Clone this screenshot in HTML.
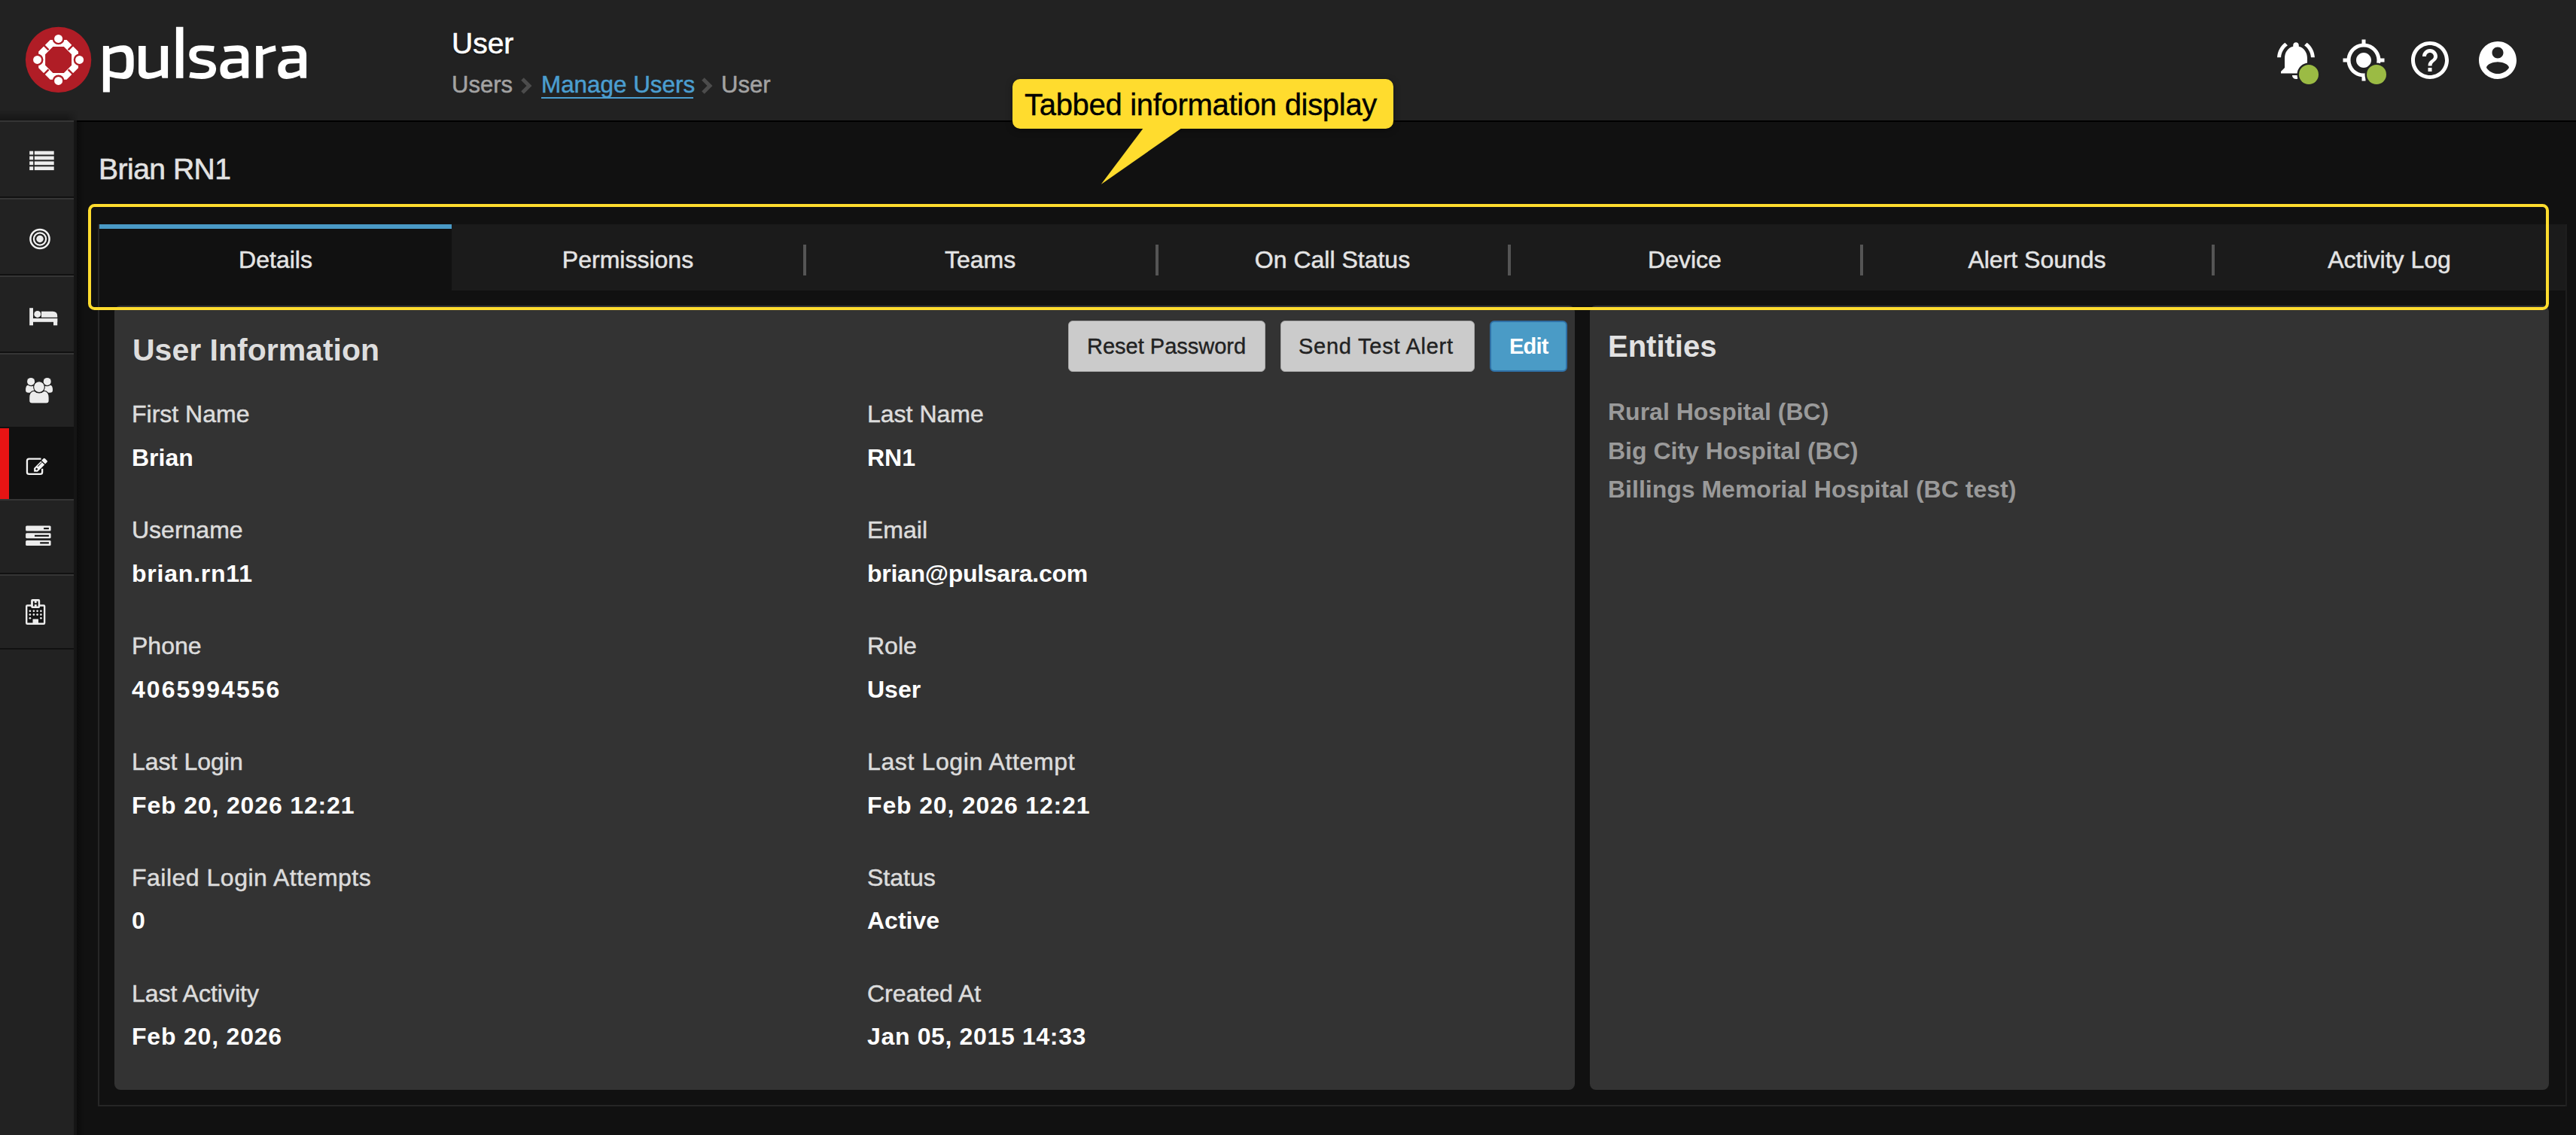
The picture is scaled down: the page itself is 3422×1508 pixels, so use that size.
<!DOCTYPE html>
<html><head><meta charset="utf-8">
<style>
html,body{margin:0;padding:0;}
body{width:3422px;height:1508px;background:#111;position:relative;overflow:hidden;font-family:"Liberation Sans",sans-serif;}
.a{position:absolute;white-space:nowrap;line-height:1;}
#hdr{position:absolute;left:0;top:0;width:3422px;height:160px;background:#222;}
#hdrline{position:absolute;left:102px;top:160px;width:3320px;height:2px;background:#000;}
#side{position:absolute;left:0;top:160px;width:98px;height:1348px;background:#222;}
#sideshadow{position:absolute;left:98px;top:162px;width:14px;height:1346px;background:linear-gradient(to right,#151515 0,#151515 4px,#0b0b0b 4px,#0e0e0e 8px,#111 14px);}
.si{position:absolute;left:0;width:98px;box-sizing:border-box;}
.lt{position:absolute;left:0;width:98px;height:2px;background:#353535;}
.dk{position:absolute;left:0;width:98px;height:2px;background:#111;}
svg{position:absolute;overflow:visible;}
.tab{position:absolute;top:298px;height:88px;width:468px;background:#1b1b1b;}
.tabt{position:absolute;left:0;width:468px;text-align:center;top:329px;font-size:32px;color:#e4e4e4;line-height:1;-webkit-text-stroke:0.5px #e4e4e4;}
.sep{position:absolute;top:325px;width:4px;height:41px;background:#555;}
.panel{position:absolute;top:406px;background:#333;border-radius:8px;}
.lbl{font-size:32px;color:#dcdcdc;-webkit-text-stroke:0.5px #dcdcdc;}
.val{font-size:32px;color:#fff;font-weight:bold;}
.btn{position:absolute;top:426px;height:68px;box-sizing:border-box;border-radius:6px;background:#cbcbcb;border:1px solid #a9a9a9;}
</style></head><body>

<!-- header -->
<div id="hdr"></div>
<div id="hdrline"></div>

<!-- logo -->
<svg style="left:0;top:0" width="140" height="160">
 <g transform="translate(77.6,79.4)">
  <circle r="43.7" fill="#b01d26"/>
  <path fill="#fff" fill-rule="evenodd" d="M-10.94,-26.4 L10.94,-26.4 L26.4,-10.94 L26.4,10.94 L10.94,26.4 L-10.94,26.4 L-26.4,10.94 L-26.4,-10.94 Z M-7.25,-17.5 L7.25,-17.5 L17.5,-7.25 L17.5,7.25 L7.25,17.5 L-7.25,17.5 L-17.5,7.25 L-17.5,-7.25 Z"/>
  <g stroke="#b01d26" stroke-width="2.4">
   <line x1="13" y1="13" x2="30" y2="30"/><line x1="-13" y1="13" x2="-30" y2="30"/><line x1="13" y1="-13" x2="30" y2="-30"/><line x1="-13" y1="-13" x2="-30" y2="-30"/>
  </g>
  <g fill="#b01d26"><circle cx="0" cy="-28" r="7.9"/><circle cx="0" cy="28" r="7.9"/><circle cx="-28" cy="0" r="7.9"/><circle cx="28" cy="0" r="7.9"/></g>
  <g fill="#fff"><circle cx="0" cy="-28" r="5.5"/><circle cx="0" cy="28" r="5.5"/><circle cx="-28" cy="0" r="5.5"/><circle cx="28" cy="0" r="5.5"/></g>
 </g>
</svg>
<svg style="left:120px;top:20px" width="300" height="120"><g transform="scale(0.11646)" fill="#fff" fill-rule="evenodd">
<path d="M145,352 L212,352 L216,384 Q300,345 380,345 Q495,345 495,500 L495,575 Q495,730 380,730 Q300,730 222,705 L222,880 L145,880 Z M222,450 Q300,420 350,420 Q410,420 410,500 L410,580 Q410,660 350,660 Q290,660 222,635 Z"/>
<path d="M550,352 L632,352 L632,625 Q632,660 670,660 Q730,660 805,625 L805,352 L885,352 L885,720 L820,720 L812,690 Q720,730 660,730 Q550,730 550,640 Z"/>
<path d="M978,135 L1060,135 L1060,720 L978,720 Z"/>
<path d="M1415,355 L1405,420 Q1320,408 1260,408 Q1207,410 1207,450 Q1207,490 1260,500 L1340,516 Q1435,540 1435,610 Q1435,730 1270,730 Q1190,730 1127,712 L1140,650 Q1210,662 1270,662 Q1357,662 1357,610 Q1357,585 1320,577 L1230,558 Q1127,530 1127,450 Q1127,345 1270,345 Q1340,345 1415,355 Z"/>
<path d="M1520,360 Q1620,345 1680,345 Q1805,345 1805,460 L1805,720 L1738,720 L1728,690 Q1650,730 1580,730 Q1480,730 1480,620 Q1480,500 1620,498 L1725,495 L1725,460 Q1725,412 1670,412 Q1600,412 1535,422 Z M1725,550 L1620,553 Q1565,556 1565,605 Q1565,660 1610,660 Q1660,660 1725,628 Z"/>
<path d="M1890,352 L1960,352 L1968,395 Q2040,355 2110,345 L2118,410 Q2040,425 1970,455 L1970,720 L1890,720 Z"/>
<path transform="translate(660,0)" d="M1520,360 Q1620,345 1680,345 Q1805,345 1805,460 L1805,720 L1738,720 L1728,690 Q1650,730 1580,730 Q1480,730 1480,620 Q1480,500 1620,498 L1725,495 L1725,460 Q1725,412 1670,412 Q1600,412 1535,422 Z M1725,550 L1620,553 Q1565,556 1565,605 Q1565,660 1610,660 Q1660,660 1725,628 Z"/>
</g></svg>

<!-- title + breadcrumb -->
<div class="a" style="left:600px;top:37.5px;font-size:39px;color:#fff;text-shadow:0 1px 2px #000;-webkit-text-stroke:0.6px #fff;">User</div>
<div class="a" style="left:600px;top:97px;font-size:31px;color:#a3a3a3;-webkit-text-stroke:0.5px #a3a3a3;">Users</div>
<svg style="left:690px;top:102px" width="20" height="24"><path d="M4,3 L13,12 L4,21" fill="none" stroke="#4c4c4c" stroke-width="5"/></svg>
<div class="a" style="left:719px;top:97px;font-size:31.4px;color:#4b9ed0;-webkit-text-stroke:0.5px #4b9ed0;">Manage Users</div>
<div style="position:absolute;left:719px;top:129px;width:202px;height:2px;background:#4b9ed0;"></div>
<svg style="left:930px;top:102px" width="20" height="24"><path d="M4,3 L13,12 L4,21" fill="none" stroke="#4c4c4c" stroke-width="5"/></svg>
<div class="a" style="left:958px;top:97px;font-size:31px;color:#a3a3a3;-webkit-text-stroke:0.5px #a3a3a3;">User</div>

<!-- header icons -->
<svg style="left:3020px;top:49.5px" width="60" height="60" viewBox="0 0 24 24"><path fill="#fff" d="M7.58 4.08L6.15 2.65C3.75 4.48 2.17 7.3 2.03 10.5h2c.15-2.65 1.51-4.97 3.55-6.42zm12.39 6.42h2c-.15-3.2-1.73-6.02-4.12-7.85l-1.42 1.43c2.02 1.45 3.39 3.77 3.54 6.42zM18 11c0-3.07-1.64-5.64-4.5-6.32V4c0-.83-.67-1.5-1.5-1.5s-1.5.67-1.5 1.5v.68C7.63 5.36 6 7.92 6 11v5l-2 2v1h16v-1l-2-2v-5zm-6 11c.14 0 .27-.01.4-.04.65-.14 1.18-.58 1.44-1.18.1-.24.15-.5.15-.78h-4c.01 1.1.9 2 2.01 2z"/></svg>
<svg style="left:3109.5px;top:49.5px" width="60" height="60" viewBox="0 0 24 24"><path fill="#fff" d="M12 8c-2.21 0-4 1.79-4 4s1.79 4 4 4 4-1.79 4-4-1.79-4-4-4zm8.94 3c-.46-4.17-3.77-7.48-7.94-7.94V1h-2v2.06C6.83 3.52 3.52 6.83 3.06 11H1v2h2.06c.46 4.17 3.77 7.48 7.94 7.94V23h2v-2.06c4.17-.46 7.48-3.77 7.94-7.94H23v-2h-2.06zM12 19c-3.87 0-7-3.13-7-7s3.13-7 7-7 7 3.13 7 7-3.13 7-7 7z"/></svg>
<svg style="left:3198px;top:49.5px" width="60" height="60" viewBox="0 0 24 24"><path fill="#fff" d="M11 18h2v-2h-2v2zm1-16C6.48 2 2 6.48 2 12s4.48 10 10 10 10-4.48 10-10S17.52 2 12 2zm0 18c-4.41 0-8-3.59-8-8s3.59-8 8-8 8 3.59 8 8-3.59 8-8 8zm0-14c-2.21 0-4 1.79-4 4h2c0-1.1.9-2 2-2s2 .9 2 2c0 2-3 1.75-3 5h2c0-2.25 3-2.5 3-5 0-2.21-1.79-4-4-4z"/></svg>
<svg style="left:3288px;top:49.5px" width="60" height="60" viewBox="0 0 24 24"><path fill="#fff" d="M12 2C6.48 2 2 6.48 2 12s4.48 10 10 10 10-4.48 10-10S17.52 2 12 2zm0 3c1.66 0 3 1.34 3 3s-1.34 3-3 3-3-1.34-3-3 1.34-3 3-3zm0 14.2c-2.5 0-4.710-1.28-6-3.22.03-1.99 4-3.08 6-3.08 1.99 0 5.970 1.09 6 3.08-1.29 1.94-3.5 3.22-6 3.22z"/></svg>
<svg style="left:3040px;top:72px" width="54" height="54"><circle cx="27" cy="27" r="15.5" fill="#222"/><circle cx="27" cy="27" r="13" fill="#9bbb44"/></svg>
<svg style="left:3130px;top:72px" width="54" height="54"><circle cx="27" cy="27" r="15.5" fill="#222"/><circle cx="27" cy="27" r="13" fill="#9bbb44"/></svg>

<!-- sidebar -->
<div id="side"></div>
<div id="sideshadow"></div>
<div style="position:absolute;left:0;top:146px;width:104px;height:14px;background:linear-gradient(to bottom,rgba(0,0,0,0),rgba(0,0,0,0.35));-webkit-mask-image:linear-gradient(to right,#000 85%,transparent);"></div>
<div style="position:absolute;left:98px;top:160px;width:4px;height:2px;background:#151515;"></div>
<div class="lt" style="top:160px"></div>
<div class="dk" style="top:261px"></div>
<div class="lt" style="top:263px"></div>
<div class="dk" style="top:364px"></div>
<div class="lt" style="top:366px"></div>
<div class="dk" style="top:467px"></div>
<div class="lt" style="top:469px"></div>
<div style="position:absolute;left:0;top:567px;width:98px;height:96px;background:#111;"></div>
<div style="position:absolute;left:0;top:569px;width:12px;height:94px;background:#e81414;"></div>
<div class="lt" style="top:663px"></div>
<div class="dk" style="top:761px"></div>
<div class="lt" style="top:763px"></div>
<div class="dk" style="top:861px"></div>

<!-- side icons -->
<svg style="left:0;top:0" width="98" height="900">
 <g fill="#ececec">
  <rect x="39.2" y="200.7" width="5" height="4.8"/><rect x="45.8" y="200.7" width="25.9" height="4.8"/>
  <rect x="39.2" y="207.5" width="5" height="4.8"/><rect x="45.8" y="207.5" width="25.9" height="4.8"/>
  <rect x="39.2" y="214.4" width="5" height="4.8"/><rect x="45.8" y="214.4" width="25.9" height="4.8"/>
  <rect x="39.2" y="221.3" width="5" height="4.8"/><rect x="45.8" y="221.3" width="25.9" height="4.8"/>
 </g>
 <g fill="none" stroke="#f2f2f2"><circle cx="53" cy="317.5" r="12.6" stroke-width="2.5"/><circle cx="53" cy="317.5" r="8.1" stroke-width="2.2"/></g>
 <circle cx="53" cy="317.5" r="4.7" fill="#ececec"/>
 <!-- bed -->
 <g fill="#ececec">
  <rect x="39.2" y="409.2" width="4.8" height="23.1"/>
  <circle cx="49.8" cy="417.4" r="4.5"/>
  <path d="M55,413.8 L70,413.8 Q76.2,413.8 76.2,420 L76.2,421.7 L55,421.7 Z"/>
  <rect x="44" y="423" width="32.2" height="4.8"/>
  <rect x="71" y="423" width="5.2" height="9.3"/>
 </g>
 <!-- users -->
 <g fill="#ececec">
  <path d="M34.1,518.5 Q34.1,511.7 37.2,511.7 Q41,514.2 45.2,512.6 L46,521.7 L37.8,521.7 Q34.1,521.7 34.1,518.5 Z"/>
  <path d="M70,518.5 Q70,511.7 66.9,511.7 Q63.1,514.2 58.9,512.6 L58.1,521.7 L66.3,521.7 Q70,521.7 70,518.5 Z"/>
  <circle cx="41.1" cy="506.9" r="5"/><circle cx="62.75" cy="506.9" r="5"/>
 </g>
 <g fill="#ececec" stroke="#1a1a1a" stroke-width="1.1">
  <path d="M38.7,532.6 L38.7,528.5 Q38.7,519.8 45.5,519.3 Q52,524.8 58.5,519.3 Q65.2,519.8 65.2,528.5 L65.2,532.6 Q65.2,536.1 61.7,536.1 L42.2,536.1 Q38.7,536.1 38.7,532.6 Z"/>
  <circle cx="52" cy="514.1" r="7.4"/>
 </g>
 <!-- edit -->
 <path d="M54.5,609.55 L38.65,609.55 Q35.95,609.55 35.95,612.25 L35.95,627.15 Q35.95,629.85 38.65,629.85 L53.45,629.85 Q56.15,629.85 56.15,627.15 L56.15,622.8" fill="none" stroke="#f4f4f4" stroke-width="2.3"/>
 <g transform="translate(45.1,626.7) rotate(-45)">
  <path d="M0,0 L3.4,-3.4 L16.5,-3.4 L16.5,3.4 L3.4,3.4 Z M17.7,-3.4 L21.2,-3.4 Q22.7,-3.4 22.7,-1.9 L22.7,1.9 Q22.7,3.4 21.2,3.4 L17.7,3.4 Z" fill="#f4f4f4" stroke="#111" stroke-width="1.6" paint-order="stroke"/>
  <rect x="8.7" y="-1.75" width="7.5" height="0.8" fill="#111"/>
  <rect x="3.8" y="-1.2" width="2.4" height="2.4" fill="#111"/>
 </g>
 <!-- storage -->
 <g fill="#ececec">
  <rect x="34.1" y="698.5" width="33.5" height="7" rx="1.5"/>
  <rect x="34.1" y="708.2" width="33.5" height="7" rx="1.5"/>
  <rect x="34.1" y="717.9" width="33.5" height="7" rx="1.5"/>
 </g>
 <g fill="#111">
  <rect x="58.1" y="701.1" width="6.8" height="2.1"/>
  <rect x="46" y="710.8" width="18.9" height="2.1"/>
  <rect x="53.2" y="720.3" width="11.7" height="2.1"/>
 </g>
 <!-- hospital -->
 <rect x="35.2" y="804.5" width="23.9" height="24.2" rx="1" fill="#141414" stroke="#ececec" stroke-width="2.4"/>
 <rect x="41.1" y="796" width="12.1" height="12" rx="2" fill="#ececec"/>
 <g fill="#141414">
  <rect x="43.9" y="798.8" width="1.9" height="6.7"/><rect x="48.7" y="798.8" width="1.9" height="6.7"/><rect x="44" y="801.3" width="6.5" height="1.8"/>
 </g>
 <g fill="#ececec">
  <circle cx="39.9" cy="811.8" r="1.35"/><circle cx="44.9" cy="811.8" r="1.35"/><circle cx="49.6" cy="811.8" r="1.35"/><circle cx="54.4" cy="811.8" r="1.35"/>
  <circle cx="39.9" cy="816.6" r="1.35"/><circle cx="44.9" cy="816.6" r="1.35"/><circle cx="49.6" cy="816.6" r="1.35"/><circle cx="54.4" cy="816.6" r="1.35"/>
  <circle cx="39.9" cy="821.3" r="1.35"/><circle cx="54.4" cy="821.3" r="1.35"/>
  <rect x="43.5" y="822.5" width="7.5" height="7.3"/>
 </g>
</svg>

<!-- page title -->
<div class="a" style="left:131px;top:205px;font-size:39px;color:#e2e2e2;letter-spacing:-0.5px;-webkit-text-stroke:0.6px #e2e2e2;">Brian RN1</div>

<!-- container borders -->
<div style="position:absolute;left:130px;top:298px;width:2px;height:1172px;background:#262626;"></div>
<div style="position:absolute;left:130px;top:1468px;width:3280px;height:2px;background:#262626;"></div>
<div style="position:absolute;left:3408px;top:298px;width:2px;height:1172px;background:#1e1e1e;"></div>

<!-- tabs -->
<div class="tab" style="left:132px;background:#111;"><div style="position:absolute;left:0;top:0;width:468px;height:6px;background:#4a9ac6;"></div></div>
<div class="tab" style="left:600px;"></div>
<div class="tab" style="left:1068px;"></div>
<div class="tab" style="left:1536px;"></div>
<div class="tab" style="left:2004px;"></div>
<div class="tab" style="left:2472px;"></div>
<div class="tab" style="left:2940px;"></div>
<div class="sep" style="left:1067px"></div>
<div class="sep" style="left:1535px"></div>
<div class="sep" style="left:2003px"></div>
<div class="sep" style="left:2471px"></div>
<div class="sep" style="left:2938px"></div>
<div class="a tabt" style="left:132px">Details</div>
<div class="a tabt" style="left:600px">Permissions</div>
<div class="a tabt" style="left:1068px">Teams</div>
<div class="a tabt" style="left:1536px">On Call Status</div>
<div class="a tabt" style="left:2004px">Device</div>
<div class="a tabt" style="left:2472px">Alert Sounds</div>
<div class="a tabt" style="left:2940px">Activity Log</div>

<!-- panels -->
<div class="panel" style="left:152px;width:1940px;height:1042px;"></div>
<div class="panel" style="left:2112px;width:1274px;height:1042px;"></div>

<!-- left panel -->
<div class="a" style="left:176px;top:445px;font-size:41px;color:#dedede;font-weight:bold;">User Information</div>
<div class="btn" style="left:1419px;width:262px;"></div>
<div class="btn" style="left:1701px;width:258px;"></div>
<div class="btn" style="left:1979px;width:103px;background:#4a9bc6;border:2px solid #2f70a6;"></div>
<div class="a" style="left:1444px;top:446px;font-size:29px;color:#222;-webkit-text-stroke:0.4px #222;">Reset Password</div>
<div class="a" style="left:1725px;top:446px;font-size:29px;color:#222;letter-spacing:0.75px;-webkit-text-stroke:0.4px #222;">Send Test Alert</div>
<div class="a" style="left:2005px;top:446px;font-size:29px;color:#fff;font-weight:bold;letter-spacing:-0.8px;">Edit</div>

<div class="a lbl" style="left:175px;top:534.3px">First Name</div>
<div class="a val" style="left:175px;top:591.8px">Brian</div>
<div class="a lbl" style="left:1152px;top:534.3px">Last Name</div>
<div class="a val" style="left:1152px;top:591.8px">RN1</div>
<div class="a lbl" style="left:175px;top:688.2px">Username</div>
<div class="a val" style="left:175px;top:745.7px;letter-spacing:0.78px">brian.rn11</div>
<div class="a lbl" style="left:1152px;top:688.2px">Email</div>
<div class="a val" style="left:1152px;top:745.7px;letter-spacing:-0.3px">brian@pulsara.com</div>
<div class="a lbl" style="left:175px;top:842.1px">Phone</div>
<div class="a val" style="left:175px;top:899.6px;letter-spacing:2.05px">4065994556</div>
<div class="a lbl" style="left:1152px;top:842.1px">Role</div>
<div class="a val" style="left:1152px;top:899.6px">User</div>
<div class="a lbl" style="left:175px;top:996.0px">Last Login</div>
<div class="a val" style="left:175px;top:1053.5px;letter-spacing:0.85px">Feb 20, 2026 12:21</div>
<div class="a lbl" style="left:1152px;top:996.0px;letter-spacing:0.62px">Last Login Attempt</div>
<div class="a val" style="left:1152px;top:1053.5px;letter-spacing:0.85px">Feb 20, 2026 12:21</div>
<div class="a lbl" style="left:175px;top:1149.9px;letter-spacing:0.5px">Failed Login Attempts</div>
<div class="a val" style="left:175px;top:1207.4px">0</div>
<div class="a lbl" style="left:1152px;top:1149.9px">Status</div>
<div class="a val" style="left:1152px;top:1207.4px">Active</div>
<div class="a lbl" style="left:175px;top:1303.8px">Last Activity</div>
<div class="a val" style="left:175px;top:1361.3px;letter-spacing:0.8px">Feb 20, 2026</div>
<div class="a lbl" style="left:1152px;top:1303.8px">Created At</div>
<div class="a val" style="left:1152px;top:1361.3px;letter-spacing:0.65px">Jan 05, 2015 14:33</div>

<!-- right panel -->
<div class="a" style="left:2136px;top:440px;font-size:40px;color:#e2e2e2;font-weight:bold;">Entities</div>
<div class="a" style="left:2136px;top:531px;font-size:32px;color:#9a9a9a;font-weight:bold;">Rural Hospital (BC)</div>
<div class="a" style="left:2136px;top:583px;font-size:32px;color:#9a9a9a;font-weight:bold;">Big City Hospital (BC)</div>
<div class="a" style="left:2136px;top:634px;font-size:32px;color:#9a9a9a;font-weight:bold;">Billings Memorial Hospital (BC test)</div>

<!-- annotation -->
<div style="position:absolute;left:116.8px;top:270.5px;width:3269px;height:141.5px;box-sizing:border-box;border:4.5px solid #ffdc2e;border-radius:8.5px;"></div>
<div style="position:absolute;left:1345px;top:105px;width:506px;height:66px;background:#ffdc2e;border-radius:10px;box-shadow:0 2px 10px rgba(0,0,0,0.35);"></div>
<svg style="left:0;top:0" width="1600" height="260"><path d="M1519,170 L1570,170 L1462.6,244.9 Z" fill="#ffdc2e"/></svg>
<div class="a" style="left:1361px;top:119px;font-size:40px;color:#000;letter-spacing:-0.3px;-webkit-text-stroke:0.4px #000;">Tabbed information display</div>

</body></html>
